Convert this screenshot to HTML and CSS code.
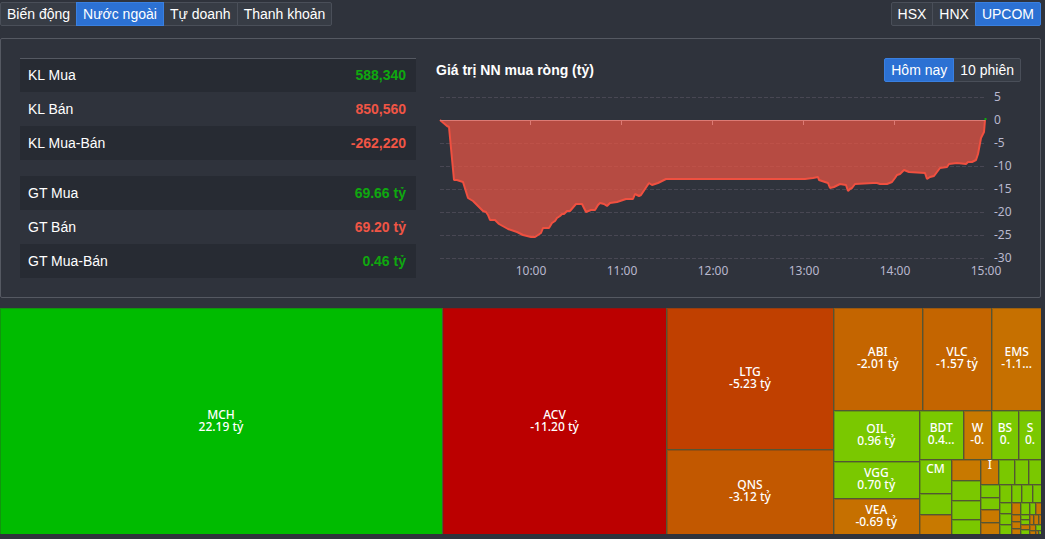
FILE: index.html
```
<!DOCTYPE html>
<html lang="vi">
<head>
<meta charset="utf-8">
<meta name="viewport" content="width=device-width, initial-scale=1">
<title>Nước ngoài - UPCOM</title>
<link rel="stylesheet" href="styles.css">
</head>
<body>
<header class="toolbar">
  <nav class="group">
    <button type="button" class="btn">Biến động</button>
    <button type="button" class="btn active">Nước ngoài</button>
    <button type="button" class="btn">Tự doanh</button>
    <button type="button" class="btn">Thanh khoản</button>
  </nav>
  <nav class="group">
    <button type="button" class="btn">HSX</button>
    <button type="button" class="btn">HNX</button>
    <button type="button" class="btn active">UPCOM</button>
  </nav>
</header>
<main>
  <section class="card">
    <div class="stats">
      <table class="table ruled">
        <tbody>
          <tr><th scope="row">KL Mua</th><td class="up">588,340</td></tr>
          <tr><th scope="row">KL Bán</th><td class="down">850,560</td></tr>
          <tr><th scope="row">KL Mua-Bán</th><td class="down">-262,220</td></tr>
        </tbody>
      </table>
      <table class="table">
        <tbody>
          <tr><th scope="row">GT Mua</th><td class="up">69.66 tỷ</td></tr>
          <tr><th scope="row">GT Bán</th><td class="down">69.20 tỷ</td></tr>
          <tr><th scope="row">GT Mua-Bán</th><td class="up">0.46 tỷ</td></tr>
        </tbody>
      </table>
    </div>
    <div class="chart">
      <div class="chart-head">
        <h2 class="title">Giá trị NN mua ròng (tỷ)</h2>
        <div class="group">
          <button type="button" class="btn active">Hôm nay</button>
          <button type="button" class="btn">10 phiên</button>
        </div>
      </div>
      <svg class="plot" viewBox="436 82 585 196" role="img" aria-label="Giá trị NN mua ròng">
        <path class="grid" d="M440 97.5H985M440 143.5H985M440 166.5H985M440 189.5H985M440 212.5H985M440 235.5H985M440 258.5H985"/>
        <path class="area" d="M440 120L447 126L449 127L454 180L457 180L463 182L468 198L473 201L483 211L486 212L488 215L490 220L495 220L499 224L508 229L517 232L523 235L531 237L535 237L541 233L543 228L549 228L552 223L555 221L557 218L560 216L562 214L564 214L567 211L570 211L576 204L582 204L586 212L591 210L595 210L598 205L600 203L604 204L607 206L610 203L617 202L626 199L633 199L635 194L639 196L641 195L649 183L652 185L658 183L666 179L805 179L813 178L818 177L819 180L828 183L830 188L834 187L840 184L846 185L848 191L850 189L852 188L855 184L873 183L877 183L880 184L887 184L892 182L895 178L897 175L900 174L904 170L909 172L925 173L927 179L930 177L934 176L940 168L947 167L949 164L957 163L966 164L968 162L972 162L976 160L978 154L981 138L984 132L985 120Z"/>
        <path class="line" d="M440 120L447 126L449 127L454 180L457 180L463 182L468 198L473 201L483 211L486 212L488 215L490 220L495 220L499 224L508 229L517 232L523 235L531 237L535 237L541 233L543 228L549 228L552 223L555 221L557 218L560 216L562 214L564 214L567 211L570 211L576 204L582 204L586 212L591 210L595 210L598 205L600 203L604 204L607 206L610 203L617 202L626 199L633 199L635 194L639 196L641 195L649 183L652 185L658 183L666 179L805 179L813 178L818 177L819 180L828 183L830 188L834 187L840 184L846 185L848 191L850 189L852 188L855 184L873 183L877 183L880 184L887 184L892 182L895 178L897 175L900 174L904 170L909 172L925 173L927 179L930 177L934 176L940 168L947 167L949 164L957 163L966 164L968 162L972 162L976 160L978 154L981 138L984 132L985 120"/>
        <path class="axis" d="M440 120.5H985M530.5 120V125M621.5 120V125M712.5 120V125M803.5 120V125M894.5 120V125"/>
        <path class="gain" d="M985.5 120V118"/>
        <g class="ylab">
          <text x="994" y="101">5</text><text x="994" y="124">0</text><text x="994" y="147">-5</text><text x="994" y="170">-10</text><text x="994" y="193">-15</text><text x="994" y="216">-20</text><text x="994" y="239">-25</text><text x="994" y="262">-30</text>
        </g>
        <g class="xlab">
          <text x="531" y="275">10:00</text><text x="622" y="275">11:00</text><text x="713" y="275">12:00</text><text x="804" y="275">13:00</text><text x="895" y="275">14:00</text><text x="986" y="275">15:00</text>
        </g>
      </svg>
    </div>
  </section>

  <section class="treemap row">
    <div class="tile buy-max" style="--s:442"><span>MCH</span><span>22.19 tỷ</span></div>
    <div class="tile sell-max" style="--s:223"><span>ACV</span><span>-11.20 tỷ</span></div>
    <div class="col" style="--s:166">
      <div class="tile sell-4" style="--s:141"><span>LTG</span><span>-5.23 tỷ</span></div>
      <div class="tile sell-3" style="--s:84"><span>QNS</span><span>-3.12 tỷ</span></div>
    </div>
    <div class="col" style="--s:207">
      <div class="row" style="--s:102">
        <div class="tile sell-2" style="--s:88"><span>ABI</span><span>-2.01 tỷ</span></div>
        <div class="tile sell-2" style="--s:69"><span>VLC</span><span>-1.57 tỷ</span></div>
        <div class="tile sell-1" style="--s:49"><span>EMS</span><span>-1.1...</span></div>
      </div>
      <div class="row" style="--s:124">
        <div class="col" style="--s:85">
          <div class="tile buy" style="--s:50"><span>OIL</span><span>0.96 tỷ</span></div>
          <div class="tile buy" style="--s:36"><span>VGG</span><span>0.70 tỷ</span></div>
          <div class="tile sell-1" style="--s:35"><span>VEA</span><span>-0.69 tỷ</span></div>
        </div>
        <div class="col" style="--s:122">
          <div class="row" style="--s:49">
            <div class="tile buy" style="--s:43"><span>BDT</span><span>0.4...</span></div>
            <div class="tile sell" style="--s:27"><span>W</span><span>-0.</span></div>
            <div class="tile buy" style="--s:26"><span>BS</span><span>0.</span></div>
            <div class="tile buy" style="--s:22"><span>S</span><span>0.</span></div>
          </div>
          <div class="row" style="--s:74">
            <div class="col" style="--s:32">
              <div class="tile buy top" style="--s:31"><span>CM</span></div>
              <div class="tile buy" style="--s:22"></div>
              <div class="tile sell" style="--s:20"></div>
            </div>
            <div class="col" style="--s:28">
              <div class="tile sell" style="--s:19"></div>
              <div class="tile buy" style="--s:19"></div>
              <div class="tile buy" style="--s:18"></div>
              <div class="tile buy" style="--s:14"></div>
            </div>
            <div class="col" style="--s:60">
              <div class="row" style="--s:24">
                <div class="tile sell cut" style="--s:17"><span>I</span></div>
                <div class="tile buy" style="--s:15"></div>
                <div class="tile buy" style="--s:13"></div>
                <div class="tile buy" style="--s:12"></div>
              </div>
              <div class="row" style="--s:49">
                <div class="col" style="--s:18">
                  <div class="tile buy" style="--s:12"></div>
                  <div class="tile buy" style="--s:11"></div>
                  <div class="tile sell" style="--s:12"></div>
                  <div class="tile sell" style="--s:11"></div>
                </div>
                <div class="col" style="--s:41">
                  <div class="row" style="--s:17">
                    <div class="tile buy" style="--s:11"></div>
                    <div class="tile buy" style="--s:9"></div>
                    <div class="tile buy" style="--s:10"></div>
                    <div class="tile buy" style="--s:8"></div>
                  </div>
                  <div class="row" style="--s:31">
                    <div class="col" style="--s:11">
                      <div class="tile buy" style="--s:10"></div>
                      <div class="tile buy" style="--s:9"></div>
                      <div class="tile buy" style="--s:9"></div>
                    </div>
                    <div class="col" style="--s:29">
                      <div class="row" style="--s:11">
                        <div class="tile sell" style="--s:8"></div>
                        <div class="tile buy" style="--s:7"></div>
                        <div class="tile buy" style="--s:5"></div>
                        <div class="tile sell" style="--s:5"></div>
                      </div>
                      <div class="row" style="--s:19">
                        <div class="col" style="--s:8">
                          <div class="tile sell" style="--s:6"></div>
                          <div class="tile sell" style="--s:5"></div>
                          <div class="tile sell" style="--s:5"></div>
                        </div>
                        <div class="col" style="--s:8">
                          <div class="tile buy" style="--s:4"></div>
                          <div class="tile buy" style="--s:4"></div>
                          <div class="tile sell" style="--s:4"></div>
                          <div class="tile buy" style="--s:4"></div>
                        </div>
                        <div class="col" style="--s:11">
                          <div class="row" style="--s:9">
                            <div class="tile sell" style="--s:3"></div>
                            <div class="tile sell" style="--s:3"></div>
                            <div class="tile sell" style="--s:2"></div>
                          </div>
                          <div class="row" style="--s:9">
                            <div class="col" style="--s:5">
                              <div class="tile sell" style="--s:4"></div>
                              <div class="tile sell" style="--s:3"></div>
                            </div>
                            <div class="col" style="--s:5">
                              <div class="tile buy" style="--s:4"></div>
                              <div class="row" style="--s:3">
                                <div class="tile sell" style="--s:2"></div>
                                <div class="tile buy" style="--s:2"></div>
                              </div>
                            </div>
                          </div>
                        </div>
                      </div>
                    </div>
                  </div>
                </div>
              </div>
            </div>
          </div>
        </div>
      </div>
    </div>
  </section>
</main>
</body>
</html>
```

FILE: styles.css
```
* {
  box-sizing: border-box;
}

body {
  margin: 0;
  padding: 2px 4px 4px 0;
  background: #2f333c;
  color: #fff;
  font: 14px/20px "Liberation Sans", Arial, sans-serif;
}

.toolbar,
.chart-head {
  display: flex;
  justify-content: space-between;
  align-items: center;
}

.toolbar {
  margin-bottom: 12px;
}

.group {
  display: flex;
}

.btn {
  height: 24px;
  margin: 0 0 0 -1px;
  padding: 0 6px;
  border: 1px solid #4a4f59;
  background: #373c45;
  color: #fff;
  font: inherit;
  cursor: pointer;
}

.btn:first-child {
  margin-left: 0;
  border-radius: 2px 0 0 2px;
}

.btn:last-child {
  border-radius: 0 2px 2px 0;
}

.btn.active {
  position: relative;
  background: #2c71d3;
  border-color: #3a80e0;
}

.card {
  display: grid;
  grid-template-columns: 396fr 585fr;
  gap: 20px;
  margin-bottom: 10px;
  padding: 19px;
  border: 1px solid #555962;
  border-radius: 2px;
}

.stats {
  display: flex;
  flex-direction: column;
  gap: 16px;
}

.table {
  width: 100%;
  border-spacing: 0;
}

.table tr {
  height: 34px;
}

.table tr:nth-child(odd) {
  background: #272b33;
}

.table th,
.table td {
  padding: 0 8px;
  text-align: left;
  font-weight: normal;
}

.table td {
  padding-right: 10px;
  text-align: right;
  font-weight: bold;
}

.ruled tr:first-child {
  box-shadow: inset 0 1px #555962;
}

.table .up {
  color: #0fa80f;
}

.table .down {
  color: #f05545;
}

.chart {
  min-width: 0;
}

.title {
  margin: 0;
  font-size: 14px;
  line-height: 24px;
}

.plot {
  display: block;
  width: 100%;
  font: 12px "Noto Sans", sans-serif;
  fill: #b9b8ce;
}

.grid {
  stroke: #484753;
  stroke-dasharray: 4 2;
}

.axis {
  fill: none;
  stroke: #dc7a74;
}

.area {
  fill: #f05545;
  fill-opacity: 0.7;
}

.line,
.gain {
  fill: none;
  stroke: #f05040;
  stroke-width: 2;
  stroke-linejoin: bevel;
}

.gain {
  stroke: #0fa80f;
}

.xlab {
  text-anchor: middle;
}

.treemap {
  height: 226px;
  background: #535635;
  font: 500 12px/12px "Noto Sans", sans-serif;
}

.row,
.col {
  display: flex;
  gap: 1px;
  min-width: 0;
  min-height: 0;
}

.col {
  flex-direction: column;
}

.row > *,
.col > * {
  flex: var(--s) 1 0;
}

.tile {
  display: flex;
  flex-direction: column;
  align-items: center;
  justify-content: center;
  min-width: 0;
  min-height: 0;
  padding-bottom: 1px;
  overflow: hidden;
  white-space: nowrap;
  box-shadow: inset 1px 1px rgb(60 60 50 / 30%);
}

.tile:empty {
  padding: 0;
}

.top {
  justify-content: flex-start;
  padding-top: 3px;
}

.cut {
  justify-content: flex-start;
  line-height: 9px;
}

.buy-max {
  background: #00bb00;
}

.buy {
  background: #7ac800;
}

.sell-max {
  background: #bb0000;
}

.sell-4 {
  background: #c04000;
}

.sell-3 {
  background: #c25800;
}

.sell-2 {
  background: #c46500;
}

.sell-1 {
  background: #c67000;
}

.sell {
  background: #c87900;
}
```
